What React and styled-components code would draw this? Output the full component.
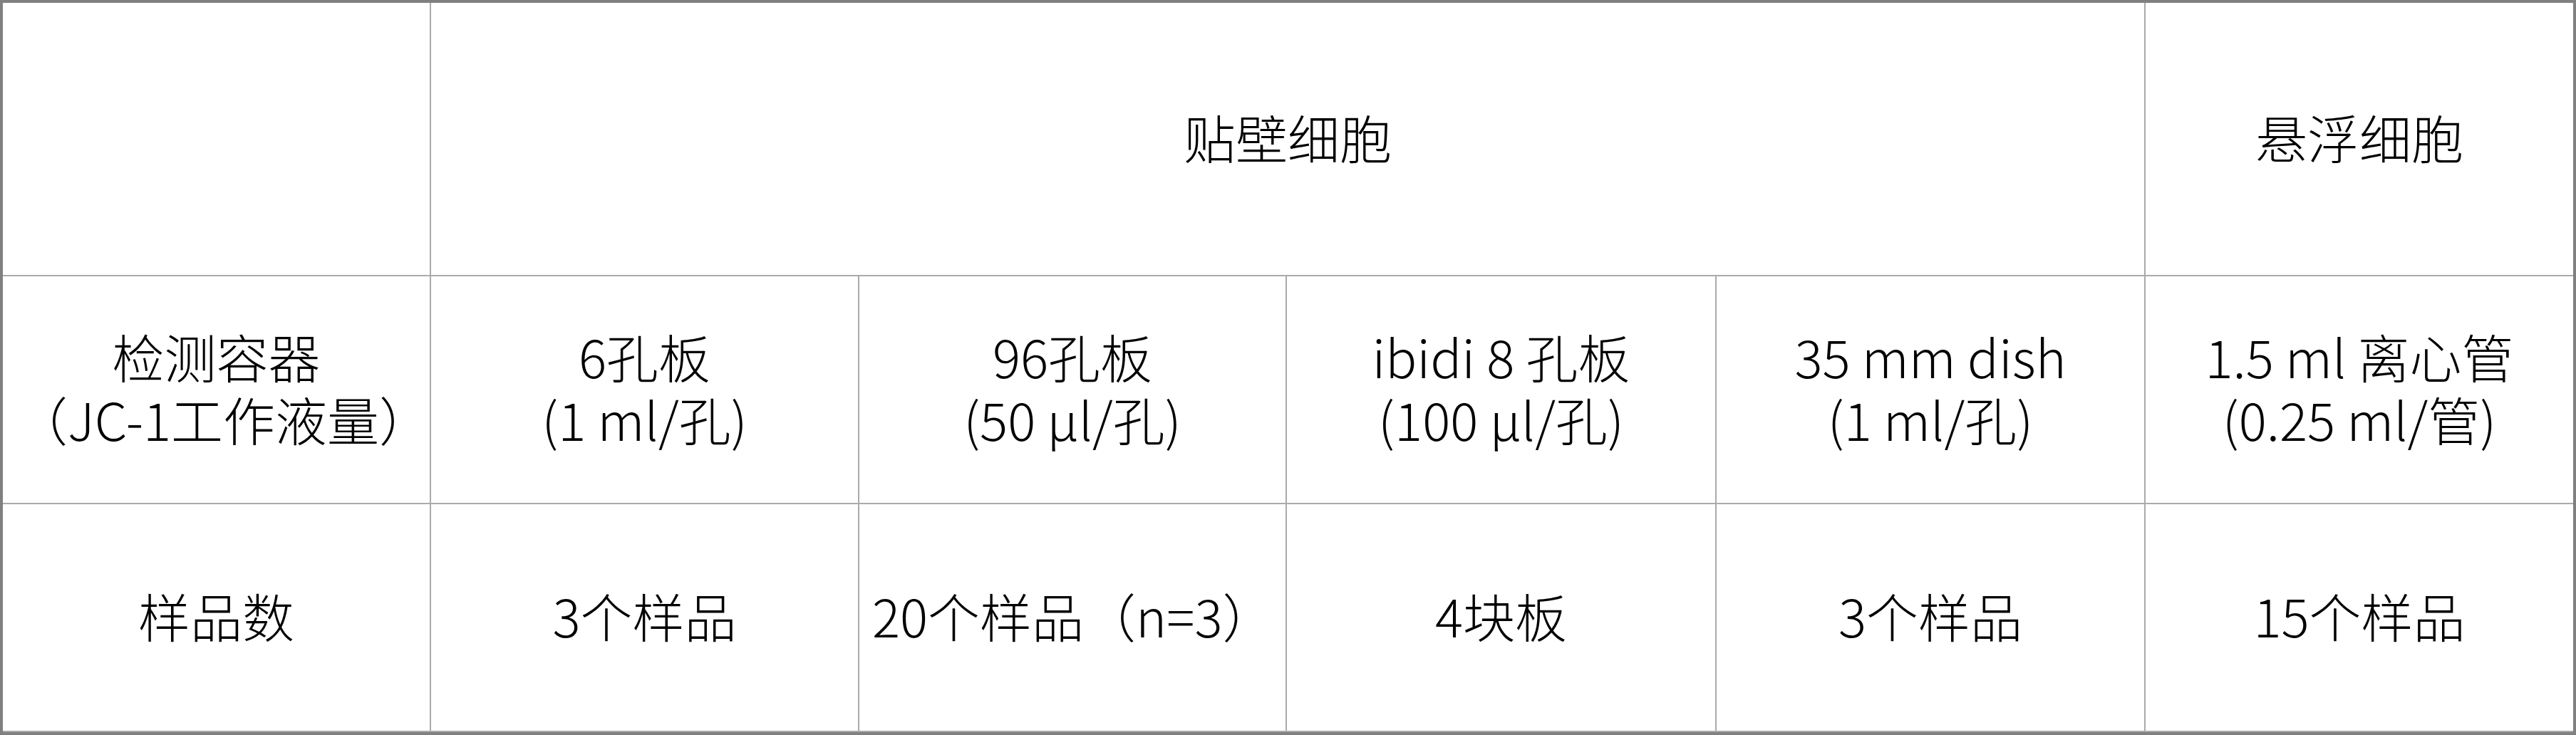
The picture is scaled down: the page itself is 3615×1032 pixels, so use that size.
import React from 'react';
import styled, { createGlobalStyle } from 'styled-components';

const GlobalStyle = createGlobalStyle`
    html, body {
        margin: 0;
        padding: 0;
        background: #ffffff;
    }
`

// column widths include the 2px right rule of each cell
const columns = [601, 601, 600, 603, 602, 600];

const rows = [
    {
        height: 384,
        cells: [
            { text: [''] },
            { text: ['贴壁细胞'], span: 4 },
            { text: ['悬浮细胞'] }
        ]
    },
    {
        height: 320,
        cells: [
            { text: ['检测容器', '（JC-1工作液量）'] },
            { text: ['6孔板', '(1 ml/孔)'] },
            { text: ['96孔板', '(50 µl/孔)'] },
            { text: ['ibidi 8 孔板', '(100 µl/孔)'] },
            { text: ['35 mm dish', '(1 ml/孔)'] },
            { text: ['1.5 ml 离心管', '(0.25 ml/管)'] }
        ]
    },
    {
        height: 320,
        cells: [
            { text: ['样品数'] },
            { text: ['3个样品'] },
            { text: ['20个样品（n=3）'] },
            { text: ['4块板'] },
            { text: ['3个样品'] },
            { text: ['15个样品'] }
        ]
    }
];

const App = () => {
    return (
        <>
            <GlobalStyle />
            <Table>
                <colgroup>
                    {columns.map((w, i) => <col key={i} style={{ width: w }} />)}
                </colgroup>
                <tbody>
                    {rows.map((row, r) => (
                        <Row key={r} style={{ height: row.height }}>
                            {row.cells.map((cell, c) => (
                                <Cell
                                    key={c}
                                    colSpan={cell.span || 1}
                                    last={c === row.cells.length - 1}
                                >
                                    {cell.text.map((line, l) => (
                                        <Line key={l}>{line}</Line>
                                    ))}
                                </Cell>
                            ))}
                        </Row>
                    ))}
                </tbody>
            </Table>
        </>
    );
};

export default App;

const Table = styled.table`
    width: 3615px;
    table-layout: fixed;
    border-collapse: separate;
    border-spacing: 0;
    border: 4px solid #808080;
    font-family: "Noto Sans CJK SC", "Noto Sans", sans-serif;
    font-weight: 300;
    font-size: 73px;
    line-height: 88px;
    color: #000000;
`

const Row = styled.tr``

const Cell = styled.td`
    box-sizing: border-box;
    border: 0;
    border-right: ${p => (p.last ? '0' : '2px solid #aaaaaa')};
    border-bottom: 2px solid #aaaaaa;
    padding: 0 18px 8px;
    text-align: center;
    vertical-align: middle;
    white-space: nowrap;
`

const Line = styled.div``
